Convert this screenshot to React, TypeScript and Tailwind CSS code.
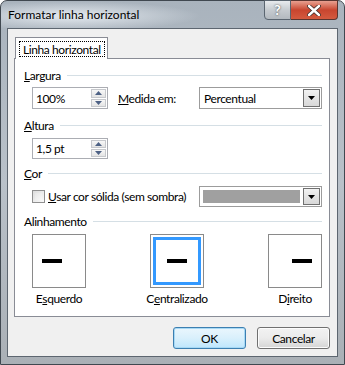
import React from "react";

const font = { fontFamily: '"Segoe UI", Lato, "Liberation Sans", sans-serif' };

function Spin() {
  return (
    <div className="flex flex-col w-[16px] h-full py-[1px] pr-[1px] gap-[1px]">
      <div className="flex-1 flex items-center justify-center border border-[#c6c8cc] bg-gradient-to-b from-[#f7f7f7] to-[#e4e4e4]">
        <svg width="7" height="4" viewBox="0 0 7 4"><path d="M3.5 0 L7 4 L0 4 Z" fill="#4d6185" /></svg>
      </div>
      <div className="flex-1 flex items-center justify-center border border-[#c6c8cc] bg-gradient-to-b from-[#f7f7f7] to-[#e4e4e4]">
        <svg width="7" height="4" viewBox="0 0 7 4"><path d="M0 0 L7 0 L3.5 4 Z" fill="#4d6185" /></svg>
      </div>
    </div>
  );
}

function Arrow() {
  return (
    <div className="w-[17px] h-full border border-[#707070] bg-gradient-to-b from-[#f2f2f2] to-[#d8d8d8] flex items-center justify-center">
      <svg width="7" height="4" viewBox="0 0 7 4"><path d="M0 0 L7 0 L3.5 4 Z" fill="#000" /></svg>
    </div>
  );
}

function Section({ children }: { children: React.ReactNode }) {
  return (
    <div className="flex items-center h-[15px] pl-[9px] pr-[7px]">
      <span className="whitespace-nowrap">{children}</span>
      <div className="flex-1 h-px bg-[#d5dfe5] ml-[6px]" />
    </div>
  );
}

function AlignBox({ pos, selected }: { pos: "left" | "center" | "right"; selected?: boolean }) {
  const dash = <div className="w-[20px] h-[4px] bg-black" />;
  const justify = pos === "left" ? "justify-start pl-[7px]" : pos === "center" ? "justify-center" : "justify-end pr-[7px]";
  return (
    <div className="w-[54px] h-[54px] border border-[#8a8a8a] bg-white p-[2px]">
      <div className={`w-full h-full flex items-center ${justify} ${selected ? "border-[3px] border-[#3399ff]" : ""}`}>
        {dash}
      </div>
    </div>
  );
}

export default function App() {
  return (
    <div style={font} className="w-[345px] h-[365px] text-[12px] text-black leading-[15px] relative overflow-hidden">
      <div className="absolute inset-0 rounded-t-[7px] border border-[#404850] bg-gradient-to-b from-[#a9b3bd] via-[#b9c1c9] to-[#aab0b6] flex flex-col">
        {/* title bar */}
        <div className="h-[27px] relative flex items-start">
          <div className="absolute left-0 top-0 w-[200px] h-[27px] bg-[radial-gradient(ellipse_at_70px_15px,rgba(235,240,245,0.9),rgba(235,240,245,0)_70%)]" />
          <span className="relative ml-[7px] mt-[6px] text-[12px] text-black">Formatar linha horizontal</span>
          <div className="absolute right-[6px] top-[-1px] flex h-[20px]">
            <div className="w-[27px] h-[20px] rounded-bl-[4px] border border-[#5a6570] bg-gradient-to-b from-[#e8ebee] via-[#c6cbd0] to-[#b3b9bf] flex items-center justify-center">
              <span className="text-[14px] font-bold text-white [text-shadow:0_0_2px_#333] leading-none">?</span>
            </div>
            <div className="w-[47px] h-[20px] rounded-br-[4px] border border-l-0 border-[#5a3530] bg-gradient-to-b from-[#e8a090] via-[#c8452f] to-[#d45a3f] flex items-center justify-center">
              <svg width="14" height="11" viewBox="0 0 14 11">
                <path d="M2 1 L12 10 M12 1 L2 10" stroke="#3a2a28" strokeWidth="4" strokeLinecap="round" />
                <path d="M2 1 L12 10 M12 1 L2 10" stroke="#fff" strokeWidth="2.4" strokeLinecap="round" />
              </svg>
            </div>
          </div>
        </div>
        {/* client area */}
        <div className="mx-[6px] border border-[#5d6670] bg-[#f0f0f0] flex flex-col h-[329px] pt-[8px] tracking-[-0.4px]">
          <div className="ml-[6px] mr-[7px] flex flex-col">
            {/* tab */}
            <div className="flex h-[21px]">
              <div className="relative z-10 w-[93px] h-[22px] bg-white border border-b-0 border-[#898c95] ml-px pt-[3px] pl-[3px]">
                <div className="border border-dotted border-black w-[86px] h-[16px] flex items-center pl-[3px] whitespace-nowrap">Linha horizontal</div>
              </div>
            </div>
            <div className="bg-white border border-[#898c95] h-[259px] flex flex-col pt-[9px]">
              <Section><u>L</u>argura</Section>
              <div className="flex items-center mt-[4px] h-[22px] pl-[17px] pr-[7px]">
                <div className="w-[76px] h-[22px] border border-[#abadb3] flex items-center justify-between">
                  <span className="pl-[3px]">100%</span>
                  <Spin />
                </div>
                <span className="ml-[10px]"><u>M</u>edida em:</span>
                <div className="ml-auto w-[123px] h-[22px] border border-[#9c9c9c] flex items-center p-px">
                  <span className="pl-[3px] flex-1">Percentual</span>
                  <Arrow />
                </div>
              </div>
              <div className="mt-[9px]"><Section><u>A</u>ltura</Section></div>
              <div className="flex items-center mt-[5px] h-[21px] pl-[17px]">
                <div className="w-[76px] h-[21px] border border-[#abadb3] flex items-center justify-between">
                  <span className="pl-[3px]">1,5 pt</span>
                  <Spin />
                </div>
              </div>
              <div className="mt-[7px]"><Section><u>C</u>or</Section></div>
              <div className="flex items-center mt-[5px] h-[21px] pl-[17px] pr-[7px]">
                <div className="w-[13px] h-[13px] border border-[#8f8f8f] bg-gradient-to-br from-[#dcdcdc] to-[#fafafa] p-[2px]">
                  <div className="w-full h-full bg-gradient-to-br from-[#e6e6e6] to-[#f8f8f8]" />
                </div>
                <span className="ml-[3px]"><u>U</u>sar cor sólida (sem sombra)</span>
                <div className="ml-auto w-[123px] h-[21px] border border-[#9c9c9c] flex items-center p-px">
                  <div className="flex-1 h-full p-[2px] pr-[3px]">
                    <div className="w-full h-full bg-[#a0a0a0]" />
                  </div>
                  <Arrow />
                </div>
              </div>
              <div className="mt-[7px]"><Section>Alinhamento</Section></div>
              <div className="flex justify-between mt-[5px] pl-[17px] pr-[7px]">
                <AlignBox pos="left" />
                <AlignBox pos="center" selected />
                <AlignBox pos="right" />
              </div>
              <div className="flex mt-[3px] h-[15px] pl-[17px] pr-[7px] justify-between">
                <div className="w-[54px] flex justify-center">E<u>s</u>querdo</div>
                <div className="w-[54px] flex justify-center whitespace-nowrap">C<u>e</u>ntralizado</div>
                <div className="w-[54px] flex justify-center">D<u>i</u>reito</div>
              </div>
            </div>
            <div className="flex justify-end gap-[11px] mt-[10px]">
              <div className="w-[73px] h-[22px] rounded-[3px] border border-[#3c7fb1] bg-gradient-to-b from-[#eaf6fd] via-[#d9f0fc] to-[#bee6fd] flex items-center justify-center shadow-[inset_0_0_0_1px_#a7d9f5]">OK</div>
              <div className="w-[73px] h-[22px] rounded-[3px] border border-[#707070] bg-gradient-to-b from-[#f2f2f2] via-[#ebebeb] to-[#d5d5d5] flex items-center justify-center shadow-[inset_0_0_0_1px_#fcfcfc]">Cancelar</div>
            </div>
          </div>
        </div>
      </div>
    </div>
  );
}
